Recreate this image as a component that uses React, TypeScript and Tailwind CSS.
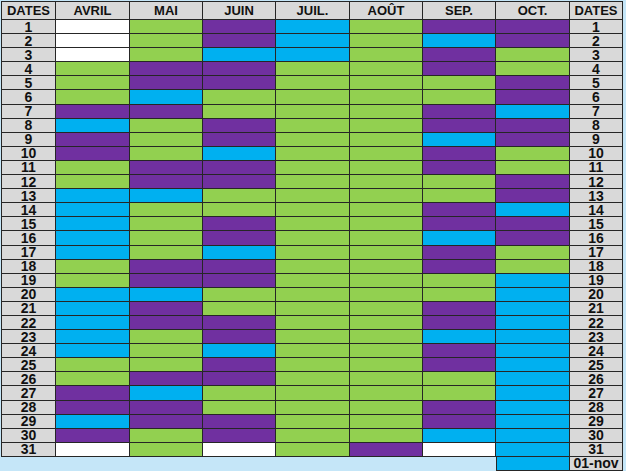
const MONTHS: { label: string; days: string }[] = [
  { label: "AVRIL", days: "WWWGGGPBPPGGBBBBBGGBBBBBGGPPBPW" },
  { label: "MAI", days: "GGGPPBPGGGPPBGGGGPPBPPGGGPBPPGG" },
  { label: "JUIN", days: "PPBPPGGPPBPPGGPPBPPGGPPBPPGGPPW" },
  { label: "JUIL.", days: "BBB" + "G".repeat(28) },
  { label: "AOÛT", days: "G".repeat(30) + "P" },
  { label: "SEP.", days: "PBPPGGPPBPPGGPPBPPGGPPBPPGGPPBW" },
  { label: "OCT.", days: "PPGGPPBPPGGPPBPPGG" + "B".repeat(13) },
];

const COLOR: Record<string, string> = {
  G: "bg-[#92d050]",
  P: "bg-[#7030a0]",
  B: "bg-[#00b0f0]",
  W: "bg-white",
};

const cell = "border-r border-b border-[#262626]";
const gray = `${cell} bg-[#d9d9d9] flex items-center justify-center overflow-hidden text-[#111] font-bold`;

export default function App() {
  const days = Array.from({ length: 31 }, (_, i) => i + 1);

  return (
    <div
      className="w-[626px] h-[471px] overflow-hidden bg-[#c5e6f8] pl-px pt-px"
      style={{ fontFamily: '"Liberation Sans", Arial, sans-serif' }}
    >
      <div className="grid grid-cols-[55px_74px_73px_73px_74px_73px_73px_74px_53px] grid-rows-[19px_repeat(32,14.1px)] w-fit">
        {/* header */}
        <div className={`${gray} border-l border-t text-[13px] leading-[14px]`}>DATES</div>
        {MONTHS.map((m) => (
          <div key={m.label} className={`${gray} border-t text-[13px] leading-[14px]`}>
            {m.label}
          </div>
        ))}
        <div className={`${gray} border-t text-[13px] leading-[14px]`}>DATES</div>

        {days.map((d) => (
          <div key={d} className="contents">
            <div className={`${gray} border-l text-[14px] leading-[12px]`}>{d}</div>
            {MONTHS.map((m) => (
              <div key={m.label} className={`${cell} ${COLOR[m.days[d - 1]]}`} />
            ))}
            <div className={`${gray} text-[14px] leading-[12px]`}>{d}</div>
          </div>
        ))}

        {/* 1er novembre */}
        {Array.from({ length: 7 }, (_, i) => (
          <div key={i} />
        ))}
        <div className={`${cell} border-l bg-[#00b0f0]`} />
        <div className={`${gray} text-[14px] leading-[12px]`}>01-nov</div>
      </div>
    </div>
  );
}
